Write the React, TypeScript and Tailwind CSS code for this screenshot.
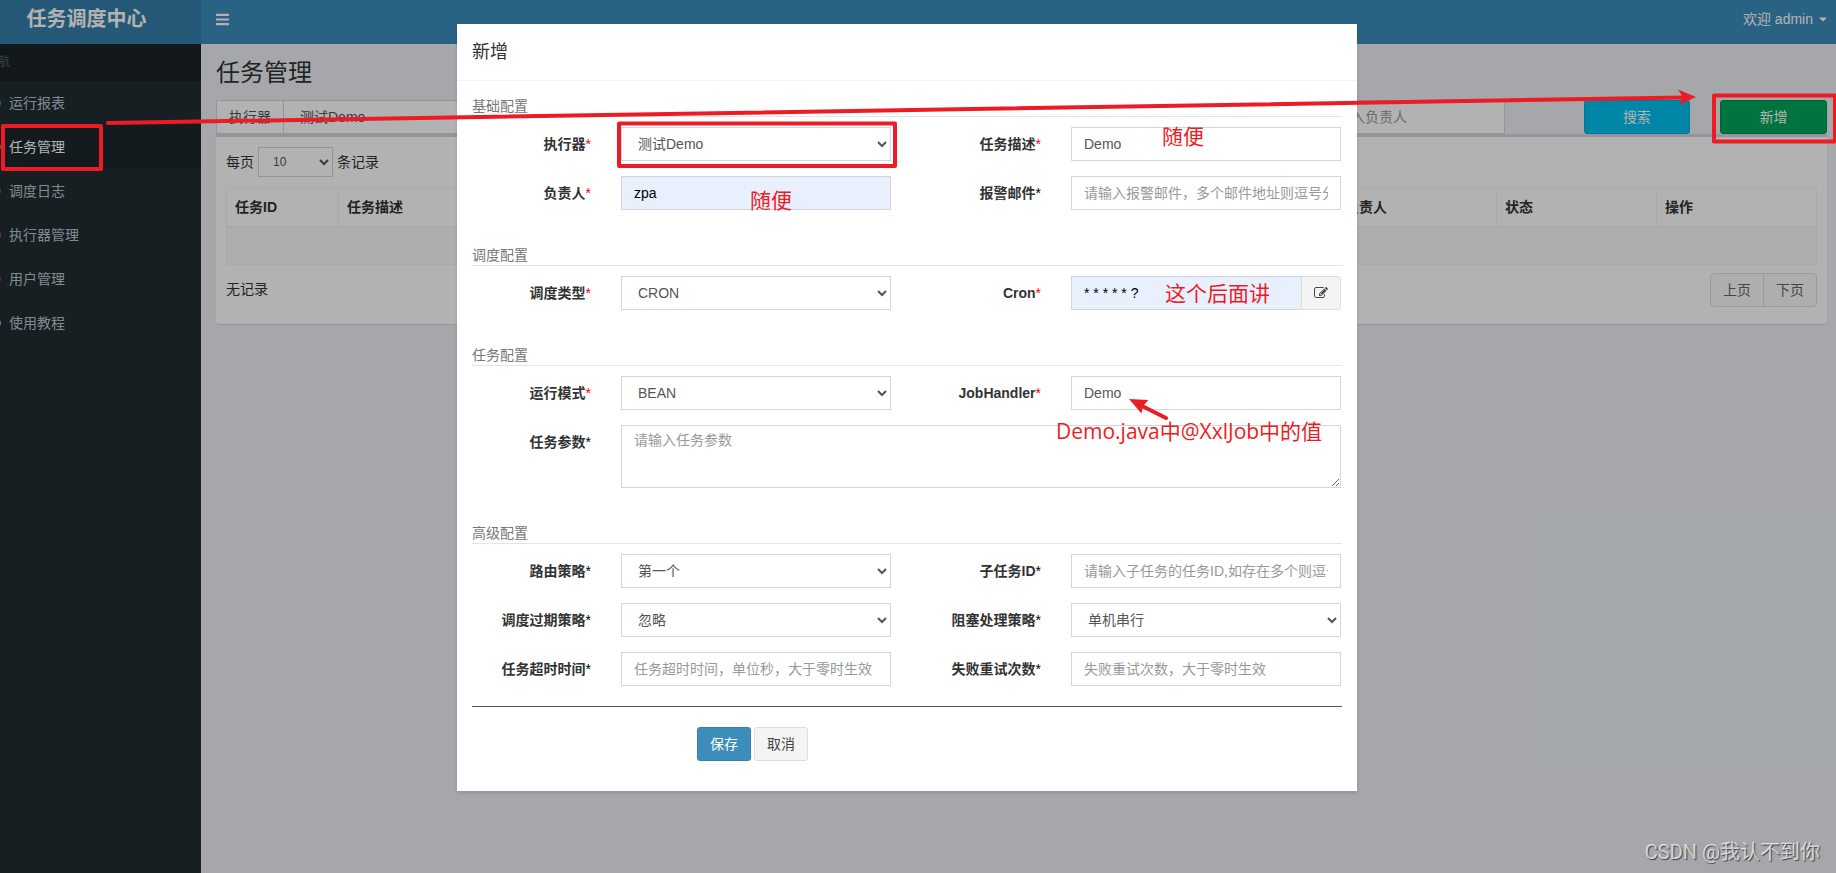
import React, { useState } from 'react';
import clsx from 'clsx';
import { FaBars, FaRegCircle, FaCaretDown } from 'react-icons/fa';

const menu = [
  { label: '运行报表', dot: 'text-[#00c0ef]' },
  { label: '任务管理', dot: 'text-[#f39c12]' },
  { label: '调度日志', dot: 'text-[#00a65a]' },
  { label: '执行器管理', dot: 'text-[#dd4b39]' },
  { label: '用户管理', dot: 'text-[#605ca8]' },
  { label: '使用教程', dot: 'text-[#d2d6de]' },
];

const control = 'w-full h-[34px] px-3 border border-[#d2d6de] bg-white text-[#555] placeholder:text-[#999] outline-none';

function Section({ title, children }: { title: string; children: React.ReactNode }) {
  return (
    <section className="pb-5">
      <h4 className="h-[21px] mb-2.5 border-b border-[#e5e5e5] leading-5 text-[#777]">{title}</h4>
      <div className="-ml-4 -mr-3.5">{children}</div>
    </section>
  );
}

function Row({ children }: { children: React.ReactNode }) {
  return <div className="grid grid-cols-12 pb-[15px]">{children}</div>;
}

type FieldProps = { id: string; label: string; required?: boolean; wide?: boolean; children: React.ReactNode };

function Field({ id, label, required, wide, children }: FieldProps) {
  return (
    <>
      <label htmlFor={id} className="col-span-2 px-[15px] pt-[7px] text-right font-bold leading-5 text-[#333]">
        {label}
        <span className={clsx('font-normal', required ? 'text-[#f00]' : 'text-black')}>*</span>
      </label>
      <div className={clsx('flex px-[15px]', wide ? 'col-span-10' : 'col-span-4')}>{children}</div>
    </>
  );
}

function Select({ id, value }: { id: string; value: string }) {
  return (
    <select id={id} className={control}>
      <option>{value}</option>
    </select>
  );
}

function Sidebar() {
  return (
    <aside className="w-[201px] shrink-0 overflow-hidden bg-[#222d32]">
      <nav className="-ml-[29px]">
        <div className="h-[37px] pl-[15px] bg-[#1a2226] text-xs leading-[37px] text-[#4b646f]">导航</div>
        {menu.map((item) => (
          <a
            key={item.label}
            href="#"
            className={clsx(
              'flex h-11 items-center pl-[18px]',
              item.label === '任务管理' ? 'bg-[#1e282c] text-white' : 'text-[#b8c7ce]'
            )}
          >
            <span className="w-5">
              <FaRegCircle className={clsx('w-3 h-3', item.dot)} />
            </span>
            {item.label}
          </a>
        ))}
      </nav>
    </aside>
  );
}

function JobTable() {
  return (
    <div className="rounded-b-[3px] border-t-[3px] border-[#d2d6de] bg-white p-2.5 pb-[17px] shadow-[0_1px_1px_rgba(0,0,0,0.1)]">
      <label className="flex items-center gap-1 text-[#333]">
        每页
        <select className="w-[75px] h-[30px] px-2.5 border border-[#d2d6de] text-xs text-[#555]">
          <option>10</option>
        </select>
        条记录
      </label>

      <table className="mt-[11px] w-full table-fixed border-collapse border border-[#f4f4f4] text-left text-[#333]">
        <thead>
          <tr className="h-[38px] border-b-2 border-[#f4f4f4]">
            <th className="w-28 px-2 border-r border-[#f4f4f4]">任务ID</th>
            <th className="px-2 border-r border-[#f4f4f4]">任务描述</th>
            <th className="w-40 px-2 border-r border-[#f4f4f4]">负责人</th>
            <th className="w-40 px-2 border-r border-[#f4f4f4]">状态</th>
            <th className="w-40 px-2">操作</th>
          </tr>
        </thead>
        <tbody>
          <tr className="h-[38px] bg-[#f9f9f9]">
            <td colSpan={5} />
          </tr>
        </tbody>
      </table>

      <div className="mt-2 flex items-start justify-between text-[#333]">
        <span className="pt-1.5">无记录</span>
        <div className="flex h-[34px] rounded-[4px] border border-[#ddd] bg-[#fafafa] text-[#666]">
          <button className="px-3 border-r border-[#ddd]">上页</button>
          <button className="px-3">下页</button>
        </div>
      </div>
    </div>
  );
}

function AddJobModal() {
  const [desc, setDesc] = useState('Demo');
  const [author, setAuthor] = useState('zpa');
  const [cron, setCron] = useState('* * * * * ?');
  const [handler, setHandler] = useState('Demo');

  return (
    <div className="absolute inset-0 bg-black/30 pt-6 pr-[22px]">
      <div role="dialog" aria-label="新增" className="mx-auto w-[900px] bg-white shadow-[0_2px_3px_rgba(0,0,0,0.125)]">
        <div className="flex h-[57px] items-center border-b border-[#f4f4f4] px-[15px]">
          <h4 className="text-lg text-[#333]">新增</h4>
        </div>

        <form className="p-[15px]">
          <Section title="基础配置">
            <Row>
              <Field id="group" label="执行器" required>
                <Select id="group" value="测试Demo" />
              </Field>
              <Field id="desc" label="任务描述" required>
                <input id="desc" className={control} value={desc} onChange={(e) => setDesc(e.target.value)} />
              </Field>
            </Row>
            <Row>
              <Field id="author" label="负责人" required>
                <input
                  id="author"
                  className="w-full h-[34px] px-3 border border-[#d2d6de] bg-[#e8f0fe] text-black outline-none"
                  value={author}
                  onChange={(e) => setAuthor(e.target.value)}
                />
              </Field>
              <Field id="email" label="报警邮件">
                <input id="email" className={control} placeholder="请输入报警邮件，多个邮件地址则逗号分隔" />
              </Field>
            </Row>
          </Section>

          <Section title="调度配置">
            <Row>
              <Field id="scheduleType" label="调度类型" required>
                <Select id="scheduleType" value="CRON" />
              </Field>
              <Field id="cron" label="Cron" required>
                <input
                  id="cron"
                  className="min-w-0 flex-1 h-[34px] px-3 border border-r-0 border-[#d2d6de] bg-[#e8f0fe] text-black outline-none"
                  value={cron}
                  onChange={(e) => setCron(e.target.value)}
                />
                <button
                  type="button"
                  aria-label="编辑 Cron"
                  className="flex w-10 items-center justify-center rounded-r-[3px] border border-[#ddd] bg-[#f4f4f4] text-[#444]"
                >
                  <svg viewBox="0 0 1792 1792" className="w-3.5 h-3.5" fill="currentColor">
                    <path d="M888 1184l116-116-152-152-116 116v56h96v96h56zm440-720q-16-16-33 1l-350 350q-17 17-1 33t33-1l350-350q17-17 1-33zm80 594v190q0 119-84.500 203.500t-203.500 84.500h-832q-119 0-203.500-84.500t-84.500-203.500v-832q0-119 84.500-203.500t203.500-84.500h832q63 0 117 25 15 7 18 23 3 17-9 29l-49 49q-14 14-32 8-23-6-45-6h-832q-66 0-113 47t-47 113v832q0 66 47 113t113 47h832q66 0 113-47t47-113v-126q0-13 9-22l64-64q15-15 35-7t20 29zm-96-738l288 288-672 672h-288v-288zm444 132l-92 92-288-288 92-92q28-28 68-28t68 28l152 152q28 28 28 68t-28 68z" />
                  </svg>
                </button>
              </Field>
            </Row>
          </Section>

          <Section title="任务配置">
            <Row>
              <Field id="glueType" label="运行模式" required>
                <Select id="glueType" value="BEAN" />
              </Field>
              <Field id="handler" label="JobHandler" required>
                <input id="handler" className={control} value={handler} onChange={(e) => setHandler(e.target.value)} />
              </Field>
            </Row>
            <Row>
              <Field id="param" label="任务参数" wide>
                <textarea
                  id="param"
                  className="w-full h-[63px] px-3 py-1 border border-[#d2d6de] leading-5 placeholder:text-[#999] outline-none"
                  placeholder="请输入任务参数"
                />
              </Field>
            </Row>
          </Section>

          <Section title="高级配置">
            <Row>
              <Field id="route" label="路由策略">
                <Select id="route" value="第一个" />
              </Field>
              <Field id="child" label="子任务ID">
                <input id="child" className={control} placeholder="请输入子任务的任务ID,如存在多个则逗号分隔" />
              </Field>
            </Row>
            <Row>
              <Field id="misfire" label="调度过期策略">
                <Select id="misfire" value="忽略" />
              </Field>
              <Field id="block" label="阻塞处理策略">
                <Select id="block" value="单机串行" />
              </Field>
            </Row>
            <Row>
              <Field id="timeout" label="任务超时时间">
                <input id="timeout" className={control} placeholder="任务超时时间，单位秒，大于零时生效" />
              </Field>
              <Field id="retry" label="失败重试次数">
                <input id="retry" className={control} placeholder="失败重试次数，大于零时生效" />
              </Field>
            </Row>
          </Section>

          <hr className="-mt-[15px] mb-5 border-[#555]" />
          <div className="mb-[15px] flex gap-[3px] pl-[225px]">
            <button type="button" className="h-[34px] px-3 rounded-[3px] border border-[#367fa9] bg-[#3c8dbc] text-white">
              保存
            </button>
            <button type="button" className="h-[34px] px-3 rounded-[3px] border border-[#ddd] bg-[#f4f4f4] text-[#444]">
              取消
            </button>
          </div>
        </form>
      </div>
    </div>
  );
}

// Red tutorial marks drawn over the page
function Annotations() {
  const note = "absolute whitespace-nowrap text-[21px] leading-7 font-['Open_Sans','Noto_Sans_CJK_SC',sans-serif]";
  return (
    <div className="pointer-events-none absolute inset-0 text-[#ed1c24]">
      <svg className="absolute left-0 top-0" width="1836" height="873" fill="none" stroke="currentColor">
        <g strokeWidth="4" strokeLinejoin="round">
          <rect x="3" y="126" width="98" height="43" />
          <rect x="619" y="123.500" width="276" height="42.500" />
          <rect x="1714" y="95.500" width="121" height="46" />
        </g>
        <path d="M108 123L1684 97.500" strokeWidth="4" strokeLinecap="round" />
        <path d="M1696 97L1678 89.500L1683 97.500L1679 105Z" fill="currentColor" stroke="none" />
        <path d="M1166 418L1142 406" strokeWidth="4" strokeLinecap="round" />
        <path d="M1129 399L1148.500 400L1143 406L1141.500 413.500Z" fill="currentColor" stroke="none" />
      </svg>
      <span className={clsx(note, 'left-[1162px] top-[122px]')}>随便</span>
      <span className={clsx(note, 'left-[750px] top-[186px]')}>随便</span>
      <span className={clsx(note, 'left-[1165px] top-[279px]')}>这个后面讲</span>
      <span className={clsx(note, 'left-[1056px] top-[417px]')}>Demo.java中@XxlJob中的值</span>
    </div>
  );
}

export default function App() {
  return (
    <div className="relative flex min-h-screen flex-col overflow-hidden bg-[#ecf0f5] text-sm leading-5 font-['Liberation_Sans','Noto_Sans_CJK_SC',sans-serif]">
      <header className="flex h-11 text-white">
        <div className="w-[201px] shrink-0 bg-[#367fa9] pr-[29px] pl-px text-center text-xl font-bold leading-[38px]">任务调度中心</div>
        <div className="flex flex-1 items-start justify-between bg-[#3c8dbc] pl-[15px] pr-[9px] leading-[38px]">
          <button aria-label="菜单" className="flex h-[38px] items-center">
            <FaBars className="w-[13px] h-[15px]" />
          </button>
          <a href="#" className="flex items-center gap-1.5">
            欢迎 admin
            <FaCaretDown className="w-2 h-3" />
          </a>
        </div>
      </header>

      <div className="flex flex-1">
        <Sidebar />
        <main className="min-w-0 flex-1 pl-[15px] pr-[9px]">
          <h1 className="pt-4 pb-3.5 text-2xl leading-[26px] text-[#333]">任务管理</h1>
          <div className="-mx-[15px] grid grid-cols-12">
            <div className="col-span-3 flex px-[15px]">
              <label htmlFor="filterGroup" className="h-[34px] shrink-0 px-3 border border-r-0 border-[#d2d6de] bg-white leading-8 text-[#555]">
                执行器
              </label>
              <Select id="filterGroup" value="测试Demo" />
            </div>
            <div className="col-span-2 col-start-9 px-[15px]">
              <input
                aria-label="负责人"
                className="w-4/5 h-[34px] px-3 border border-[#d2d6de] bg-white placeholder:text-[#999]"
                placeholder="请输入负责人"
              />
            </div>
            <div className="px-[15px]">
              <button className="w-full h-[34px] rounded-[3px] border border-[#00acd6] bg-[#00c0ef] text-white">搜索</button>
            </div>
            <div className="px-[15px]">
              <button className="w-full h-[34px] rounded-[3px] border border-[#008d4c] bg-[#00a65a] text-white">新增</button>
            </div>
          </div>
          <JobTable />
        </main>
      </div>

      <AddJobModal />
      <Annotations />
      <div className="absolute bottom-1.5 right-4 text-xl leading-[30px] text-white/70 [text-shadow:1px_1px_1px_rgba(0,0,0,0.6)] font-['Roboto','Noto_Sans_CJK_SC',sans-serif]">
        CSDN @我认不到你
      </div>
    </div>
  );
}
